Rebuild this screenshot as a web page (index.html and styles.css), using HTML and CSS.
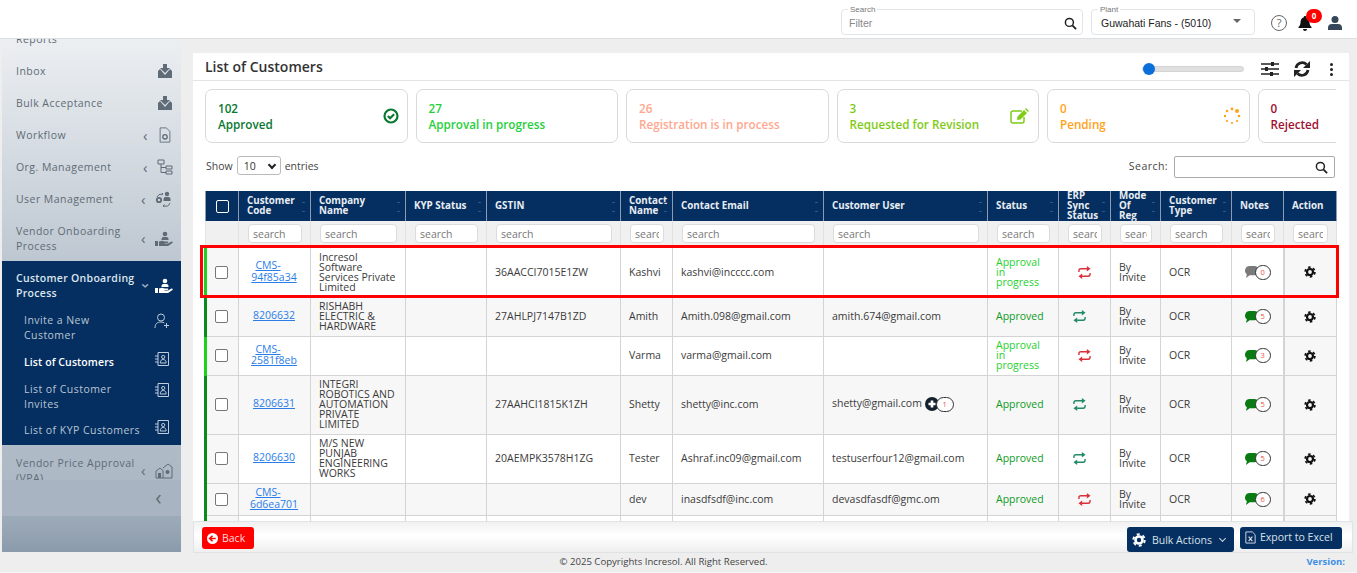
FILE: index.html
```html
<!DOCTYPE html>
<html lang="en">
<head>
    <meta charset="UTF-8">
    <meta name="viewport" content="width=device-width, initial-scale=1.0">
    <title>List of Customers</title>
    <link rel="stylesheet" href="styles.css">
</head>
<body>
    <!-- icon sprites -->
    <svg class="sprites" width="0" height="0">
        <symbol id="i-inbox" viewBox="0 0 16 16"><path d="M6 1h4v4h3L8 10 3 5h3z"/><path d="M1 8l2-2 5 6 5-6 2 2v7H1z"/></symbol>
        <symbol id="i-file" viewBox="0 0 14 18"><path d="M1.500 1h7l4 4v12h-11z" fill="none" stroke="currentColor"/><circle cx="7" cy="11" r="2.500" fill="none" stroke="currentColor" stroke-width="1.500"/></symbol>
        <symbol id="i-tree" viewBox="0 0 16 16"><path d="M1 1h6v4H1zM9 7h6v3H9zM9 12h6v3H9zM4 5v8.500h5M4 8.500h5" fill="none" stroke="currentColor"/></symbol>
        <symbol id="i-usergear" viewBox="0 0 18 16"><circle cx="12" cy="3" r="2.200"/><path d="M8.500 10V8a2 2 0 0 1 2-2h3a2 2 0 0 1 2 2v2z"/><circle cx="4" cy="9" r="2.200" fill="none" stroke="currentColor" stroke-width="1.800"/><path d="M2 6a5 5 0 0 1 5-3M7 2l1 1-1.500 1M15 12a5 5 0 0 1-6 3M9.500 13.500L8 15l1.500 1" fill="none" stroke="currentColor"/></symbol>
        <symbol id="i-hand" viewBox="0 0 18 16"><circle cx="10" cy="3" r="2.300"/><path d="M6.500 9V8a2 2 0 0 1 2-2h3a2 2 0 0 1 2 2v1z"/><path d="M0 10h3v5H0zM4 10.500l3-.800 3 .800h2.500a.8.800 0 0 1 0 1.600H9.500l0 .400h3.500l3.500-2a.9.900 0 0 1 1 1.400L13 15H4z"/></symbol>
        <symbol id="i-useradd" viewBox="0 0 16 16"><circle cx="7" cy="4.500" r="3.500" fill="none" stroke="currentColor"/><path d="M1 15c0-4 2-6 6-6 1.500 0 2.500.300 3.300 1M12.500 10v5M10 12.500h5" fill="none" stroke="currentColor"/></symbol>
        <symbol id="i-contact" viewBox="0 0 16 16"><path d="M4 1.500h10.500v13H4zM1 5h3M1 8h3M1 11h3" fill="none" stroke="currentColor"/><circle cx="9.200" cy="6" r="1.600" fill="none" stroke="currentColor"/><path d="M6.300 12c0-2.500 1.200-3.500 2.900-3.500s2.900 1 2.900 3.500z" fill="none" stroke="currentColor"/></symbol>
        <symbol id="i-house" viewBox="0 0 18 16"><path d="M1 15V8l4-3 3 2.500V15zM8 5l5-4 4 3v11H8" fill="none" stroke="currentColor"/><path d="M3 10h3v5H3z"/><circle cx="12.500" cy="9" r="2"/></symbol>
        <symbol id="i-check" viewBox="0 0 16 16"><circle cx="8" cy="8" r="6.500" fill="none" stroke="currentColor" stroke-width="2.200"/><path d="M4.800 8l2.300 2.300 4-4" fill="none" stroke="currentColor" stroke-width="2.200"/></symbol>
        <symbol id="i-edit" viewBox="0 0 20 16"><path d="M14 9v4a2 2 0 0 1-2 2H3a2 2 0 0 1-2-2V5a2 2 0 0 1 2-2h9" fill="none" stroke="currentColor" stroke-width="1.500"/><path d="M7.500 8.500l6.500-6.500 3 3-6.500 6.500-3.500.500zM15 1l1-1 3 3-1 1z"/></symbol>
        <symbol id="i-spinner" viewBox="0 0 18 18"><circle cx="9" cy="2" r="1.400"/><circle cx="14" cy="4" r="2"/><circle cx="16" cy="9" r="1.300"/><circle cx="14" cy="14" r="1.100"/><circle cx="9" cy="16" r="1.100"/><circle cx="4" cy="14" r="1.100"/><circle cx="2" cy="9" r="1.200"/><circle cx="4" cy="4" r="1.300"/></symbol>
        <symbol id="i-sliders" viewBox="0 0 18 16"><path d="M0 3h18M0 8h18M0 13h18" stroke="currentColor" stroke-width="1.300"/><path d="M10 1h3v4h-3zM4 6h3v4H4zM9 11h3v4H9z"/></symbol>
        <symbol id="i-refresh" viewBox="0 0 18 18"><path d="M3 8a6.200 6.200 0 0 1 10.500-3.500M15 10a6.200 6.200 0 0 1-10.500 3.500" fill="none" stroke="currentColor" stroke-width="2.800"/><path d="M17 1v7h-7zM1 17v-7h7z"/></symbol>
        <symbol id="i-search" viewBox="0 0 14 14"><circle cx="5.800" cy="5.800" r="4.300" fill="none" stroke="currentColor" stroke-width="1.600"/><path d="M9 9l4 4" stroke="currentColor" stroke-width="2"/></symbol>
        <symbol id="i-bell" viewBox="0 0 16 16"><path d="M8 1a1.200 1.200 0 0 1 1.200 1.300C11.500 3 12.500 5 12.500 7.500c0 2.500 1 3.500 2 4.500v1h-13v-1c1-1 2-2 2-4.500S4.500 3 6.800 2.300A1.200 1.200 0 0 1 8 1zM6 14h4a2 2 0 0 1-4 0z"/></symbol>
        <symbol id="i-user" viewBox="0 0 16 16"><circle cx="8" cy="4.500" r="3.500"/><path d="M1 15v-2a4 4 0 0 1 4-4h6a4 4 0 0 1 4 4v2z"/></symbol>
        <symbol id="i-sync" viewBox="0 0 16 14"><path d="M2 6.500V5a2 2 0 0 1 2-2h8M14 7.500V9a2 2 0 0 1-2 2H4" fill="none" stroke="currentColor" stroke-width="1.500"/><path d="M10.500 0l4 3-4 3zM5.500 8l-4 3 4 3z"/></symbol>
        <symbol id="i-comment" viewBox="0 0 16 13"><path d="M6 0h5a5 5 0 0 1 0 10H6l-4 3 1-4A5 5 0 0 1 6 0z"/></symbol>
        <symbol id="i-gear" viewBox="0 0 14 14"><circle cx="7" cy="7" r="3.500" fill="none" stroke="currentColor" stroke-width="2.600"/><circle cx="7" cy="7" r="5.700" fill="none" stroke="currentColor" stroke-width="2" stroke-dasharray="3 2.970"/></symbol>
        <symbol id="i-plus" viewBox="0 0 16 16"><circle cx="8" cy="8" r="8"/><path d="M8 4v8M4 8h8" stroke="#fff" stroke-width="3"/></symbol>
        <symbol id="i-back" viewBox="0 0 12 12"><circle cx="6" cy="6" r="6"/><path d="M9.500 6H4M6 3L3 6l3 3" fill="none" stroke="#f00" stroke-width="1.800"/></symbol>
        <symbol id="i-excel" viewBox="0 0 12 14"><path d="M1 1h7l3 3v9H1z" fill="none" stroke="currentColor"/><path d="M4 6l4 5M8 6l-4 5" stroke="currentColor" stroke-width="1.200"/></symbol>
    </svg>

    <div class="topbar">
        <div class="field field-search">
            <span class="field-label">Search</span>
            <span class="field-value muted">Filter</span>
            <svg class="icon icon-13"><use href="#i-search"/></svg>
        </div>
        <div class="field field-plant">
            <span class="field-label">Plant</span>
            <span class="field-value">Guwahati Fans - (5010)</span>
            <span class="caret"></span>
        </div>
        <span class="help">?</span>
        <span class="bell">
            <svg class="icon icon-16"><use href="#i-bell"/></svg>
            <span class="bell-badge">0</span>
        </span>
        <svg class="icon icon-16 top-user"><use href="#i-user"/></svg>
    </div>

    <div class="layout">
        <aside class="sidebar">
            <ul class="nav">
                <li class="nav-item"><span>Reports</span></li>
                <li class="nav-item"><span>Inbox</span><svg class="icon icon-16"><use href="#i-inbox"/></svg></li>
                <li class="nav-item"><span>Bulk Acceptance</span><svg class="icon icon-16"><use href="#i-inbox"/></svg></li>
                <li class="nav-item"><span>Workflow</span><i class="chev">‹</i><svg class="icon icon-16"><use href="#i-file"/></svg></li>
                <li class="nav-item"><span>Org. Management</span><i class="chev">‹</i><svg class="icon icon-16"><use href="#i-tree"/></svg></li>
                <li class="nav-item"><span>User Management</span><i class="chev">‹</i><svg class="icon icon-18"><use href="#i-usergear"/></svg></li>
                <li class="nav-item tall"><span>Vendor Onboarding<br>Process</span><i class="chev">‹</i><svg class="icon icon-18"><use href="#i-hand"/></svg></li>
                <li class="nav-group">
                    <div class="nav-item tall nav-open"><span>Customer Onboarding<br>Process</span><i class="chev chev-down">‹</i><svg class="icon icon-18"><use href="#i-hand"/></svg></div>
                    <div class="sub-item tall"><span>Invite a New<br>Customer</span><svg class="icon icon-16"><use href="#i-useradd"/></svg></div>
                    <div class="sub-item current"><span>List of Customers</span><svg class="icon icon-16"><use href="#i-contact"/></svg></div>
                    <div class="sub-item tall"><span>List of Customer<br>Invites</span><svg class="icon icon-16"><use href="#i-contact"/></svg></div>
                    <div class="sub-item"><span>List of KYP Customers</span><svg class="icon icon-16"><use href="#i-contact"/></svg></div>
                </li>
                <li class="nav-item tall nav-last"><span>Vendor Price Approval<br>(VPA)</span><i class="chev">‹</i><svg class="icon icon-18"><use href="#i-house"/></svg></li>
            </ul>
            <div class="collapse-bar">‹</div>
            <div class="side-rest"></div>
        </aside>

        <main class="main">
            <section class="card">
                <header class="card-head">
                    <h1>List of Customers</h1>
                    <span class="slider"><span class="slider-thumb"></span></span>
                    <svg class="icon icon-18 head-sliders"><use href="#i-sliders"/></svg>
                    <svg class="icon head-refresh"><use href="#i-refresh"/></svg>
                    <span class="kebab"><b></b><b></b><b></b></span>
                </header>

                <div class="stats">
                    <div class="stat c-approved"><div><b>102</b><b>Approved</b></div><svg class="icon icon-16"><use href="#i-check"/></svg></div>
                    <div class="stat c-progress"><div><b>27</b><b>Approval in progress</b></div></div>
                    <div class="stat c-register"><div><b>26</b><b>Registration is in process</b></div></div>
                    <div class="stat c-revision"><div><b>3</b><b>Requested for Revision</b></div><svg class="icon icon-edit"><use href="#i-edit"/></svg></div>
                    <div class="stat c-pending"><div><b>0</b><b>Pending</b></div><svg class="icon icon-spinner"><use href="#i-spinner"/></svg></div>
                    <div class="stat c-rejected"><div><b>0</b><b>Rejected</b></div></div>
                </div>

                <div class="tools">
                    <label class="show">Show <span class="select">10<i></i></span> entries</label>
                    <label class="find"><span class="find-label">Search:</span> <span class="find-box"><svg class="icon icon-13"><use href="#i-search"/></svg></span></label>
                </div>

                <div class="table-wrap">
                    <table class="grid">
                        <colgroup>
                            <col class="w33"><col class="w72"><col class="w95"><col class="w81"><col class="w134"><col class="w52"><col class="w151"><col class="w164"><col class="w71"><col class="w52"><col class="w50"><col class="w71"><col class="w52"><col class="w53">
                        </colgroup>
                        <thead>
                            <tr class="head-row">
                                <th class="nosort"><span class="check check-head"></span></th>
                                <th>Customer<br>Code</th>
                                <th>Company<br>Name</th>
                                <th>KYP Status</th>
                                <th>GSTIN</th>
                                <th>Contact<br>Name</th>
                                <th>Contact Email</th>
                                <th>Customer User</th>
                                <th>Status</th>
                                <th>ERP<br>Sync<br>Status</th>
                                <th>Mode<br>Of<br>Reg</th>
                                <th>Customer<br>Type</th>
                                <th class="nosort">Notes</th>
                                <th class="nosort">Action</th>
                            </tr>
                            <tr class="filter-row">
                                <td></td>
                                <td><input placeholder="search"></td>
                                <td><input placeholder="search"></td>
                                <td><input placeholder="search"></td>
                                <td><input placeholder="search"></td>
                                <td><input placeholder="search"></td>
                                <td><input placeholder="search"></td>
                                <td><input placeholder="search"></td>
                                <td><input placeholder="search"></td>
                                <td><input placeholder="search"></td>
                                <td><input placeholder="search"></td>
                                <td><input placeholder="search"></td>
                                <td><input placeholder="search"></td>
                                <td><input placeholder="search"></td>
                            </tr>
                        </thead>
                        <tbody>
                            <tr class="r50">
                                <td class="cb strip-light"><span class="check"></span></td>
                                <td class="code"><a href="#"><span class="code-head">CMS-</span><br>94f85a34</a></td>
                                <td>Incresol<br>Software<br>Services Private<br>Limited</td>
                                <td></td>
                                <td>36AACCI7015E1ZW</td>
                                <td>Kashvi</td>
                                <td>kashvi@incccc.com</td>
                                <td></td>
                                <td class="st-progress">Approval<br>in<br>progress</td>
                                <td class="ctr sync-red"><svg class="icon icon-sync"><use href="#i-sync"/></svg></td>
                                <td>By<br>Invite</td>
                                <td>OCR</td>
                                <td class="ctr"><span class="note note-none"><svg class="icon icon-comment"><use href="#i-comment"/></svg><em>0</em></span></td>
                                <td class="ctr act"><svg class="icon icon-gear"><use href="#i-gear"/></svg></td>
                            </tr>
                            <tr class="r39">
                                <td class="cb strip-dark"><span class="check"></span></td>
                                <td class="code"><a href="#">8206632</a></td>
                                <td>RISHABH<br>ELECTRIC &amp;<br>HARDWARE</td>
                                <td></td>
                                <td>27AHLPJ7147B1ZD</td>
                                <td>Amith</td>
                                <td>Amith.098@gmail.com</td>
                                <td>amith.674@gmail.com</td>
                                <td class="st-approved">Approved</td>
                                <td class="ctr sync-green"><svg class="icon icon-sync"><use href="#i-sync"/></svg></td>
                                <td>By<br>Invite</td>
                                <td>OCR</td>
                                <td class="ctr"><span class="note"><svg class="icon icon-comment"><use href="#i-comment"/></svg><em>5</em></span></td>
                                <td class="ctr act"><svg class="icon icon-gear"><use href="#i-gear"/></svg></td>
                            </tr>
                            <tr class="r39">
                                <td class="cb strip-light"><span class="check"></span></td>
                                <td class="code"><a href="#"><span class="code-head">CMS-</span><br>2581f8eb</a></td>
                                <td></td>
                                <td></td>
                                <td></td>
                                <td>Varma</td>
                                <td>varma@gmail.com</td>
                                <td></td>
                                <td class="st-progress">Approval<br>in<br>progress</td>
                                <td class="ctr sync-red"><svg class="icon icon-sync"><use href="#i-sync"/></svg></td>
                                <td>By<br>Invite</td>
                                <td>OCR</td>
                                <td class="ctr"><span class="note"><svg class="icon icon-comment"><use href="#i-comment"/></svg><em>3</em></span></td>
                                <td class="ctr act"><svg class="icon icon-gear"><use href="#i-gear"/></svg></td>
                            </tr>
                            <tr class="r59">
                                <td class="cb strip-dark"><span class="check"></span></td>
                                <td class="code"><a href="#">8206631</a></td>
                                <td>INTEGRI<br>ROBOTICS AND<br>AUTOMATION<br>PRIVATE<br>LIMITED</td>
                                <td></td>
                                <td>27AAHCI1815K1ZH</td>
                                <td>Shetty</td>
                                <td>shetty@inc.com</td>
                                <td class="user-more">shetty@gmail.com <svg class="icon icon-plus"><use href="#i-plus"/></svg><em>1</em></td>
                                <td class="st-approved">Approved</td>
                                <td class="ctr sync-green"><svg class="icon icon-sync"><use href="#i-sync"/></svg></td>
                                <td>By<br>Invite</td>
                                <td>OCR</td>
                                <td class="ctr"><span class="note"><svg class="icon icon-comment"><use href="#i-comment"/></svg><em>5</em></span></td>
                                <td class="ctr act"><svg class="icon icon-gear"><use href="#i-gear"/></svg></td>
                            </tr>
                            <tr class="r49">
                                <td class="cb strip-dark"><span class="check"></span></td>
                                <td class="code"><a href="#">8206630</a></td>
                                <td>M/S NEW<br>PUNJAB<br>ENGINEERING<br>WORKS</td>
                                <td></td>
                                <td>20AEMPK3578H1ZG</td>
                                <td>Tester</td>
                                <td>Ashraf.inc09@gmail.com</td>
                                <td>testuserfour12@gmail.com</td>
                                <td class="st-approved">Approved</td>
                                <td class="ctr sync-green"><svg class="icon icon-sync"><use href="#i-sync"/></svg></td>
                                <td>By<br>Invite</td>
                                <td>OCR</td>
                                <td class="ctr"><span class="note"><svg class="icon icon-comment"><use href="#i-comment"/></svg><em>5</em></span></td>
                                <td class="ctr act"><svg class="icon icon-gear"><use href="#i-gear"/></svg></td>
                            </tr>
                            <tr class="r32">
                                <td class="cb strip-dark"><span class="check"></span></td>
                                <td class="code"><a href="#"><span class="code-head">CMS-</span><br>6d6ea701</a></td>
                                <td></td>
                                <td></td>
                                <td></td>
                                <td>dev</td>
                                <td>inasdfsdf@inc.com</td>
                                <td>devasdfasdf@gmc.om</td>
                                <td class="st-approved">Approved</td>
                                <td class="ctr sync-red"><svg class="icon icon-sync"><use href="#i-sync"/></svg></td>
                                <td>By<br>Invite</td>
                                <td>OCR</td>
                                <td class="ctr"><span class="note"><svg class="icon icon-comment"><use href="#i-comment"/></svg><em>6</em></span></td>
                                <td class="ctr act"><svg class="icon icon-gear"><use href="#i-gear"/></svg></td>
                            </tr>
                            <tr class="r32">
                                <td class="cb strip-dark"></td>
                                <td></td><td></td><td></td><td></td><td></td><td></td><td></td><td></td><td></td><td></td><td></td><td></td><td class="act"></td>
                            </tr>
                        </tbody>
                    </table>
                    <!-- red highlight drawn over the first row -->
                    <div class="row-mark"></div>
                </div>
            </section>

            <div class="actions">
                <button class="btn btn-back"><svg class="icon icon-11"><use href="#i-back"/></svg>Back</button>
                <span class="spacer"></span>
                <button class="btn btn-bulk"><svg class="icon icon-14"><use href="#i-gear"/></svg>Bulk Actions<i class="btn-chev"></i></button>
                <button class="btn btn-excel"><svg class="icon icon-13"><use href="#i-excel"/></svg>Export to Excel</button>
            </div>
        </main>
    </div>

    <footer class="foot">
        <span>© 2025 Copyrights Incresol. All Right Reserved.</span>
        <b class="version">Version:</b>
    </footer>
</body>
</html>
```

FILE: styles.css
```css
* {
    box-sizing: border-box;
}
html, body {
    height: 100%;
}
body {
    margin: 0;
    height: 573px;
    overflow: hidden;
    background-color: #fff;
    color: #333;
    font-family: "Open Sans", Arial, sans-serif;
    font-size: 10.5px;
    display: flex;
    flex-direction: column;
}
.sprites {
    position: absolute;
}
.icon {
    display: inline-block;
    fill: currentColor;
    flex: none;
}
.icon-11 { width: 11px; height: 11px; }
.icon-13 { width: 13px; height: 13px; }
.icon-14 { width: 14px; height: 14px; }
.icon-16 { width: 16px; height: 16px; }
.icon-18 { width: 18px; height: 16px; }

/* top bar */
.topbar {
    height: 39px;
    flex: none;
    display: flex;
    align-items: flex-start;
    padding: 9px 13px 0 841px;
    background-color: #fff;
    border-bottom: 1px solid #dcdfe2;
    color: #3b4652;
}
.field {
    position: relative;
    height: 26px;
    border: 1px solid #e2e4e7;
    border-radius: 4px;
    display: flex;
    align-items: center;
    padding: 2px 5px 0 8px;
    font-family: "Liberation Sans", Arial, sans-serif;
    font-size: 10.5px;
    color: #222;
}
.field-search {
    width: 242px;
    margin-right: 8px;
    padding-left: 7px;
}
.field-plant {
    width: 164px;
    margin-right: 16px;
    padding-left: 9px;
}
.field-label {
    position: absolute;
    top: -4px;
    left: 6px;
    padding: 0 2px;
    background-color: #fff;
    font-size: 8px;
    line-height: 8px;
    color: #777;
}
.field-value {
    flex: 1;
}
.muted {
    color: #888;
}
.caret {
    width: 0;
    height: 0;
    margin: 0 8px 4px 0;
    border-left: 4px solid transparent;
    border-right: 4px solid transparent;
    border-top: 4px solid #666;
}
.help {
    width: 16px;
    height: 16px;
    margin: 6px 10px 0 0;
    border: 1.500px solid #666;
    border-radius: 50%;
    text-align: center;
    font-size: 11px;
    line-height: 13px;
    color: #666;
}
.bell {
    position: relative;
    height: 16px;
    margin: 6px 14px 0 0;
    color: #111;
}
.bell-badge {
    position: absolute;
    top: -6px;
    left: 9px;
    width: 16px;
    height: 14px;
    border-radius: 7px;
    background-color: #f00;
    color: #fff;
    font-size: 8px;
    font-weight: 700;
    line-height: 14px;
    text-align: center;
}
.top-user {
    margin-top: 6px;
    color: #36475a;
}

/* page body */
.layout {
    flex: 1;
    min-height: 0;
    display: flex;
    padding-left: 2px;
    background-color: #eee;
}
.sidebar {
    width: 179px;
    flex: none;
    height: 513px;
    overflow: hidden;
    display: flex;
    flex-direction: column;
    background: linear-gradient(#eceff2, #bcc6d0 45%, #a8b4c2);
    color: #5f6b76;
    letter-spacing: .45px;
}
.nav {
    list-style: none;
    margin: -16px 0 0;
    padding: 0;
    height: 457px;
    flex: none;
    overflow: hidden;
}
.nav-item,
.sub-item {
    display: flex;
    align-items: center;
    height: 32px;
    padding: 0 8px 0 14px;
    line-height: 15px;
}
.nav-item span,
.sub-item span {
    flex: 1;
}
.nav-item .icon {
    margin-left: 9px;
}
.nav-item.tall {
    height: 31px;
    margin: 8px 0;
}
.chev {
    font-style: normal;
    font-size: 15px;
    line-height: 15px;
    color: #5f6b76;
}
.nav-group {
    background-color: #052f60;
    color: #b9c5d3;
    height: 184px;
    padding-top: 9px;
    margin-top: -1px;
}
.nav-item.nav-open {
    color: #dfe6ee;
    font-weight: 600;
    margin: 0 0 12px;
    letter-spacing: .3px;
}
.nav-open .icon {
    color: #fff;
}
.nav-open .chev {
    color: #9fb0c3;
}
.chev-down {
    transform: rotate(-90deg);
}
.sub-item {
    padding-left: 22px;
    padding-right: 11px;
    height: 27px;
}
.sub-item .icon {
    margin: 0 0 8px 5px;
    color: #c0ccd9;
}
.sub-item.tall {
    height: 30px;
    margin: 0 0 6px;
}
.sub-item.tall .icon {
    margin-bottom: 14px;
}
.sub-item.current {
    color: #fff;
    font-weight: 600;
    letter-spacing: .1px;
    margin-bottom: 6px;
}
.nav-group .sub-item:last-child {
    margin-top: -1px;
}
.nav-item.nav-last {
    margin-top: 10px;
}
.collapse-bar {
    height: 36px;
    flex: none;
    background-color: #a8b4c1;
    color: #5f6b76;
    font-size: 21px;
    line-height: 34px;
    text-align: right;
    padding-right: 19px;
}
.side-rest {
    flex: 1;
    background: linear-gradient(#9dabb9, #8c9bac);
}

.main {
    flex: 1;
    min-width: 0;
    padding: 14px 4px 0 12px;
    display: flex;
    flex-direction: column;
}
.card {
    height: 468px;
    flex: none;
    margin-right: 4px;
    background-color: #fff;
    overflow: hidden;
}
.card-head {
    height: 28px;
    display: flex;
    align-items: center;
    padding: 0 14px 0 12px;
    border-bottom: 1px solid #e4e4e4;
    color: #222;
}
.card-head h1 {
    flex: 1;
    margin: 0;
    font-size: 14px;
    font-weight: 600;
    color: #333;
}
.slider {
    position: relative;
    width: 102px;
    height: 6px;
    margin: 5px 17px 0 0;
    border-radius: 3px;
    background-color: #e0e0e0;
    border: 1px solid #d4d4d4;
}
.slider-thumb {
    position: absolute;
    top: -4px;
    left: 0;
    width: 12px;
    height: 12px;
    border-radius: 50%;
    background-color: #0a6fd8;
}
.head-sliders {
    margin: 5px 14px 0 0;
}
.head-refresh {
    width: 18px;
    height: 18px;
    margin: 5px 19px 0 0;
}
.kebab {
    display: flex;
    flex-direction: column;
    gap: 2px;
    margin: 5px 2px 0 0;
}
.kebab b {
    width: 3px;
    height: 3px;
    border-radius: 50%;
    background-color: #222;
}

/* status tiles */
.stats {
    display: flex;
    gap: 8px;
    margin: 8px 13px 0 12px;
    overflow: hidden;
}
.stat {
    flex: none;
    width: 202.500px;
    height: 54px;
    display: flex;
    align-items: center;
    justify-content: space-between;
    padding: 0 8px 1px 12px;
    border: 1px solid #d9d9d9;
    border-radius: 7px;
    font-size: 11.700px;
    line-height: 16px;
}
.stat div b {
    display: block;
    font-weight: 600;
}
.c-approved { color: #08792f; }
.c-progress { color: #1fd03c; }
.c-register { color: #ffa78e; }
.c-revision { color: #7fcb16; }
.c-pending { color: #ffa318; }
.c-rejected { color: #a0102f; }
.icon-edit {
    width: 20px;
    height: 16px;
}
.icon-spinner {
    width: 18px;
    height: 18px;
}

/* table tools */
.tools {
    height: 35px;
    margin: 13px 14px 0 13px;
    display: flex;
    justify-content: space-between;
    color: #444;
}
.show,
.find {
    display: flex;
    align-items: flex-start;
    gap: 4px;
    line-height: 20px;
}
.select {
    width: 44px;
    height: 19px;
    padding-left: 6px;
    border: 1px solid #bbb;
    border-radius: 3px;
    position: relative;
    color: #333;
    line-height: 18px;
}
.select i {
    position: absolute;
    top: 5px;
    right: 5px;
    width: 6px;
    height: 6px;
    border: solid #222;
    border-width: 0 2px 2px 0;
    transform: rotate(45deg);
}
.find {
    gap: 6px;
}
.find-label {
    letter-spacing: .45px;
}
.find-box {
    width: 161px;
    height: 22px;
    border: 1px solid #aaa;
    border-radius: 2px;
    display: flex;
    align-items: center;
    justify-content: flex-end;
    padding-right: 6px;
    color: #222;
}

/* table */
.table-wrap {
    position: relative;
    margin: 0 0 0 6px;
    height: 330px;
    padding-left: 5px;
}
.grid {
    width: 1131px;
    border-collapse: collapse;
    table-layout: fixed;
}
.w33 { width: 33px; }
.w72 { width: 72px; }
.w95 { width: 95px; }
.w81 { width: 81px; }
.w134 { width: 134px; }
.w52 { width: 52px; }
.w151 { width: 151px; }
.w164 { width: 164px; }
.w71 { width: 71px; }
.w50 { width: 50px; }
.w53 { width: 53px; }
.head-row {
    height: 30px;
}
.head-row th {
    position: relative;
    padding: 0 8px;
    background-color: #052f60;
    border: 1px solid #8c9bb0;
    border-width: 0 1px;
    color: #e8edf3;
    font-size: 9.800px;
    font-weight: 700;
    line-height: 9.800px;
    text-align: left;
    white-space: nowrap;
}
.head-row th:not(.nosort)::after {
    content: "";
    position: absolute;
    right: 5px;
    top: 11px;
    width: 3px;
    height: 8px;
    border: solid #2f5585;
    border-width: 1px 0;
}
.head-row th:first-child {
    text-align: center;
    padding: 0;
}
.filter-row {
    height: 26px;
    background-color: #f0f0f0;
}
.filter-row td {
    padding: 0 8px 0 9px;
    border: 1px solid #e2e2e2;
    border-width: 0 1px;
}
.filter-row input {
    display: block;
    width: 100%;
    height: 19px;
    padding: 0 4px;
    border: 1px solid #dcdcdc;
    border-radius: 4px;
    background-color: #fff;
    font-family: "Open Sans", Arial, sans-serif;
    font-size: 10.500px;
}
.filter-row input::placeholder {
    color: #777;
    opacity: 1;
}
tbody td {
    padding: 0 4px 1px 8px;
    border: 1px solid #d4d4d4;
    line-height: 10px;
    color: #3a3a3a;
    background-color: #fff;
    white-space: nowrap;
}
tbody tr:nth-child(even) td {
    background-color: #f7f7f7;
}
.r50 { height: 50px; }
.r39 { height: 39px; }
.r59 { height: 59px; }
.r49 { height: 49px; }
.r32 { height: 32px; }
tbody .cb {
    padding: 0 0 0 8px;
    background-color: #f7f7f7;
}
.strip-light {
    border-left: 3px solid #1fd021;
}
.strip-dark {
    border-left: 3px solid #0b8a1c;
}
.check {
    display: block;
    width: 13px;
    height: 13px;
    border: 1px solid #777;
    border-radius: 2px;
    background-color: #fff;
}
.check-head {
    margin: 0 auto;
    border-color: #fff;
    background-color: transparent;
}
tbody .code {
    padding: 0 1px 1px 0;
    text-align: center;
    line-height: 11.500px;
}
.code a {
    color: #2b7de9;
}
.code-head {
    margin-right: 12px;
}
tbody .ctr {
    padding: 0;
    text-align: center;
}
.ctr svg {
    vertical-align: middle;
}
tbody .act {
    border-left-width: 2px;
    background-color: #f7f7f7;
    color: #111;
}
.icon-gear {
    width: 12px;
    height: 12px;
}
tbody .st-approved {
    color: #0d9a22;
}
tbody .st-progress {
    color: #23d12d;
}
tbody .sync-red {
    color: #d8333c;
}
tbody .sync-green {
    color: #238a66;
}
.sync-green svg {
    margin-right: 10px;
}
.icon-sync {
    width: 15px;
    height: 13px;
}
.note {
    display: inline-flex;
    align-items: center;
    color: #0a7a12;
}
.note-none {
    color: #7a7a7a;
}
.icon-comment {
    width: 15px;
    height: 12px;
}
.note em,
.user-more em {
    width: 16px;
    height: 15px;
    margin-left: -4px;
    border: 1px solid #333;
    border-radius: 8px;
    background-color: #fff;
    color: #ee4b4b;
    font-style: normal;
    font-size: 7.500px;
    line-height: 13px;
    text-align: center;
}
.user-more em {
    display: inline-block;
    width: 18px;
    vertical-align: middle;
    margin-left: -3px;
    position: relative;
}
.icon-plus {
    width: 14px;
    height: 14px;
    vertical-align: middle;
    color: #14202e;
}
.row-mark {
    position: absolute;
    top: 54px;
    left: 1px;
    width: 1139px;
    height: 53px;
    border: 3px solid #f00;
    pointer-events: none;
}

/* bottom actions */
.actions {
    height: 32px;
    flex: none;
    display: flex;
    align-items: flex-start;
    gap: 6px;
    padding: 5px 10px 0 8px;
    border: 1px solid #e0e3e6;
    background: linear-gradient(#f1f1f1, #fff 45%, #efefef);
}
.spacer {
    flex: 1;
}
.btn {
    height: 22px;
    display: flex;
    align-items: center;
    gap: 4px;
    border: 0;
    border-radius: 3px;
    background-color: #052f60;
    color: #d8e0ea;
    font-family: "Open Sans", Arial, sans-serif;
    font-size: 10.500px;
}
.btn-back {
    width: 52px;
    padding: 0 5px;
    background-color: #f00;
    color: #ffd9d9;
}
.btn-back .icon {
    color: #fff;
}
.btn-bulk {
    width: 107px;
    height: 25px;
    padding: 0 5px;
    gap: 6px;
}
.btn-bulk .icon {
    color: #fff;
}
.btn-chev {
    width: 5px;
    height: 5px;
    margin: 0 0 2px 2px;
    border: solid #cfd8e3;
    border-width: 0 1px 1px 0;
    transform: rotate(45deg);
}
.btn-excel {
    width: 102px;
    padding: 0 4px 2px;
    gap: 3px;
}
.foot {
    height: 20px;
    flex: none;
    display: flex;
    justify-content: center;
    position: relative;
    background-color: #eee;
    border-bottom: 1px solid #f8f8f8;
    font-size: 9.600px;
    line-height: 17px;
    color: #444;
}
.foot span {
    margin-right: 30px;
}
.version {
    position: absolute;
    right: 12px;
    color: #3d8ee6;
    font-size: 9.500px;
}
```
